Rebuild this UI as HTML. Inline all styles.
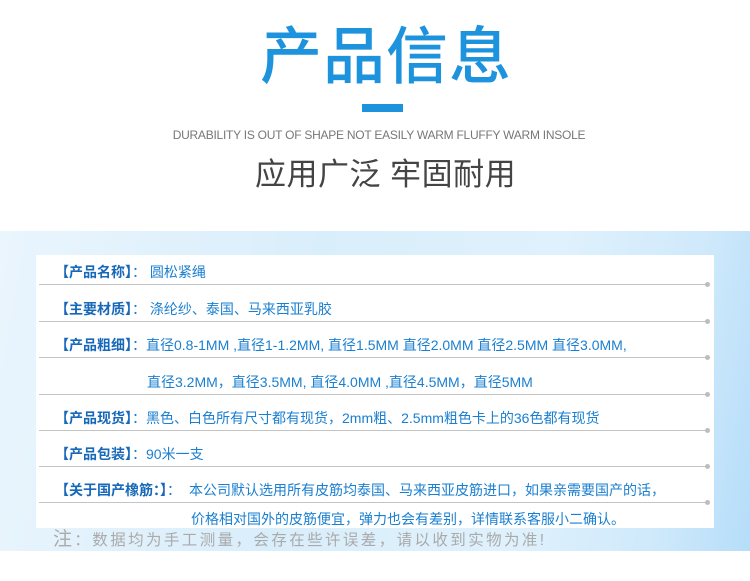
<!DOCTYPE html>
<html><head><meta charset="utf-8"><style>
*{margin:0;padding:0;box-sizing:border-box}
body{width:750px;height:581px;background:#fff;position:relative;overflow:hidden;font-family:"Liberation Sans","Noto Sans CJK SC",sans-serif}
.a{position:absolute;white-space:nowrap}
.band{position:absolute;left:0;top:231px;width:750px;height:320px;background:linear-gradient(100deg,#eaf5fd 0%,#d9eefb 40%,#dff1fc 70%,#cfe9fb 88%,#b5ddf9 100%)}
.card{position:absolute;left:36px;top:255px;width:678px;height:273px;background:#fff}
.ln{position:absolute;left:39px;width:668px;height:1px;background:#c4c4c4}
.dot{position:absolute;left:705px;width:5px;height:5px;border-radius:50%;background:#bdbdbd}
.t{position:absolute;font-size:14px;color:#1a7fd0;white-space:nowrap}
.t b{color:#1768b8;font-weight:bold}
</style></head><body>
<div class="a" style="left:260px;top:18px;font-size:62px;line-height:80px;color:#1d93de;letter-spacing:1px;font-weight:500">产品信息</div>
<div class="a" style="left:362px;top:104px;width:41px;height:8px;background:#1d93de"></div>
<div class="a" style="left:172px;top:129px;width:414px;font-size:12px;line-height:13px;color:#777;text-align:center;letter-spacing:-0.25px">DURABILITY IS OUT OF SHAPE NOT EASILY WARM FLUFFY WARM INSOLE</div>
<div class="a" style="left:255px;top:155px;font-size:31px;line-height:40px;color:#444;letter-spacing:0.5px">应用广泛 牢固耐用</div>
<div class="band"></div>
<div class="card"></div>
<div class="ln" style="top:284px"></div><div class="dot" style="top:282px"></div>
<div class="ln" style="top:321px"></div><div class="dot" style="top:319px"></div>
<div class="ln" style="top:357px"></div><div class="dot" style="top:355px"></div>
<div class="ln" style="top:394px"></div><div class="dot" style="top:392px"></div>
<div class="ln" style="top:430px"></div><div class="dot" style="top:428px"></div>
<div class="ln" style="top:466px"></div><div class="dot" style="top:464px"></div>
<div class="ln" style="top:502px"></div><div class="dot" style="top:500px"></div>
<div class="t" style="left:55px;top:262px"><b>【产品名称】</b>：&nbsp;圆松紧绳</div>
<div class="t" style="left:55px;top:299px"><b>【主要材质】</b>：&nbsp;涤纶纱、泰国、马来西亚乳胶</div>
<div class="t" style="left:55px;top:335px"><b>【产品粗细】</b>：直径0.8-1MM ,直径1-1.2MM, 直径1.5MM 直径2.0MM 直径2.5MM 直径3.0MM,</div>
<div class="t" style="left:147px;top:372px">直径3.2MM，直径3.5MM, 直径4.0MM ,直径4.5MM，直径5MM</div>
<div class="t" style="left:55px;top:408px"><b>【产品现货】</b>：黑色、白色所有尺寸都有现货，2mm粗、2.5mm粗色卡上的36色都有现货</div>
<div class="t" style="left:55px;top:444px"><b>【产品包装】</b>：90米一支</div>
<div class="t" style="left:55px;top:480px"><b>【关于国产橡筋：】</b>：<span style="margin-left:8px">本公司默认选用所有皮筋均泰国、马来西亚皮筋进口，如果亲需要国产的话，</span></div>
<div class="t" style="left:191px;top:509px">价格相对国外的皮筋便宜，弹力也会有差别，详情联系客服小二确认。</div>
<div class="a" style="left:53px;top:528px;font-size:15.5px;line-height:24px;color:#aaa;letter-spacing:2.4px"><span style="font-size:19px">注</span>：数据均为手工测量，会存在些许误差，请以收到实物为准!</div>
</body></html>
